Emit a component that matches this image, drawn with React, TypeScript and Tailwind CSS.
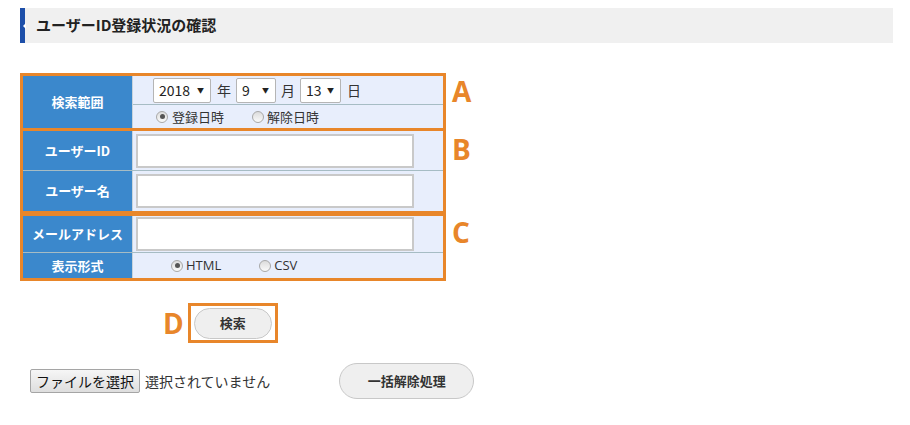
const jp = "font-['Meiryo','Noto_Sans_CJK_JP','Noto_Sans',sans-serif]";

function Radio({ checked }: { checked?: boolean }) {
  return (
    <span className="w-[12px] h-[12px] rounded-full border border-[#a8a8a8] bg-gradient-to-b from-[#dcdcdc] to-[#fafafa] flex items-center justify-center">
      {checked && <span className="w-[5px] h-[5px] rounded-full bg-[#555]" />}
    </span>
  );
}

function Select({ value, width }: { value: string; width: string }) {
  return (
    <div className={`${width} h-[25px] bg-white border border-[#b5b5b5] rounded-[2px] flex items-center justify-between pl-[5px] pr-[6px] text-[14px] text-[#222]`}>
      <span>{value}</span>
      <span className="text-[7px]">▼</span>
    </div>
  );
}

function Label({ children, h }: { children: React.ReactNode; h: string }) {
  return (
    <div className={`${h} w-[110px] shrink-0 bg-[#3b88cc] text-white font-bold text-[13px] flex items-center justify-center border-r border-[#c7d3dc]`}>
      {children}
    </div>
  );
}

function Input() {
  return <div className="w-[278px] h-[34px] bg-white border-2 border-[#c9c9c9] ml-[3px]" />;
}

function Letter({ children }: { children: React.ReactNode }) {
  return (
    <span className="font-['Open_Sans',sans-serif] font-bold text-[28px] leading-none text-[#e8862a] ml-[6px] mt-[4px]">
      {children}
    </span>
  );
}

export default function App() {
  return (
    <div className={`w-[910px] h-[425px] bg-white ${jp} text-[#333]`}>
      <div className="pt-[8px] ml-[20px] w-[873px]">
        <div className="relative h-[35px] bg-[#f0f0f0] border-l-[5px] border-[#1d4fa9] flex items-center pl-[11px]">
          <span className="absolute left-[-2px] top-[15px] w-0 h-0 border-y-[3px] border-y-transparent border-r-[3px] border-r-white" />
          <span className="text-[15px] font-bold text-[#222]">ユーザーID登録状況の確認</span>
        </div>
      </div>

      <div className="mt-[30px] ml-[20px]">
        <div className="flex items-start">
          <div className="w-[426px] border-[3px] border-[#e8862a] bg-[#e8eefc] flex">
            <Label h="h-[52px]">検索範囲</Label>
            <div className="flex-1 flex flex-col">
              <div className="h-[29px] border-b border-[#a6bcc4] flex items-center pl-[20px] text-[14px]">
                <Select value="2018" width="w-[58px]" />
                <span className="ml-[6px]">年</span>
                <span className="ml-[5px]"><Select value="9" width="w-[40px]" /></span>
                <span className="ml-[5px]">月</span>
                <span className="ml-[5px]"><Select value="13" width="w-[41px]" /></span>
                <span className="ml-[6px]">日</span>
              </div>
              <div className="h-[23px] flex items-center pl-[23px] text-[13px]">
                <Radio checked />
                <span className="ml-[4px]">登録日時</span>
                <span className="ml-[28px]"><Radio /></span>
                <span className="ml-[3px]">解除日時</span>
              </div>
            </div>
          </div>
          <Letter>A</Letter>
        </div>

        <div className="flex items-start">
          <div className="w-[426px] border-[3px] border-t-0 border-[#e8862a] bg-[#e8eefc] flex flex-col">
            <div className="flex items-center border-b border-[#a6bcc4]">
              <Label h="h-[39px]">ユーザーID</Label>
              <Input />
            </div>
            <div className="flex items-center">
              <Label h="h-[40px]">ユーザー名</Label>
              <Input />
            </div>
          </div>
          <Letter>B</Letter>
        </div>

        <div className="flex items-start">
          <div className="w-[426px] border-[3px] border-t-[2px] border-[#e8862a] bg-[#e8eefc] flex flex-col">
            <div className="flex items-center border-b border-[#a6bcc4]">
              <Label h="h-[36px]">メールアドレス</Label>
              <Input />
            </div>
            <div className="flex items-center">
              <Label h="h-[25px]">表示形式</Label>
              <div className="flex items-center pl-[38px] text-[13px] font-['Open_Sans',sans-serif]">
                <Radio checked />
                <span className="ml-[3px]">HTML</span>
                <span className="ml-[38px]"><Radio /></span>
                <span className="ml-[3px]">CSV</span>
              </div>
            </div>
          </div>
          <Letter>C</Letter>
        </div>
      </div>

      <div className="mt-[22px] ml-[163px] flex items-center">
        <span className="font-['Open_Sans',sans-serif] font-bold text-[28px] leading-none text-[#e8862a] mr-[4px]">D</span>
        <div className="w-[90px] h-[40px] border-[3px] border-[#e8862a] flex items-center justify-center">
          <button className="w-[78px] h-[31px] rounded-full bg-[#efefef] border border-[#c8c8c8] text-[13px] font-bold text-[#333]">
            検索
          </button>
        </div>
      </div>

      <div className="mt-[20px] ml-[30px] flex items-center">
        <button className="h-[24px] px-[5px] bg-gradient-to-b from-[#f6f6f6] to-[#dedede] border border-[#a5a5a5] rounded-[2px] text-[14px] text-[#111]">
          ファイルを選択
        </button>
        <span className="ml-[5px] text-[14px] text-[#333]">選択されていません</span>
        <button className="ml-[69px] w-[135px] h-[36px] rounded-full bg-[#efefef] border border-[#c8c8c8] text-[13px] font-bold text-[#333]">
          一括解除処理
        </button>
      </div>
    </div>
  );
}
